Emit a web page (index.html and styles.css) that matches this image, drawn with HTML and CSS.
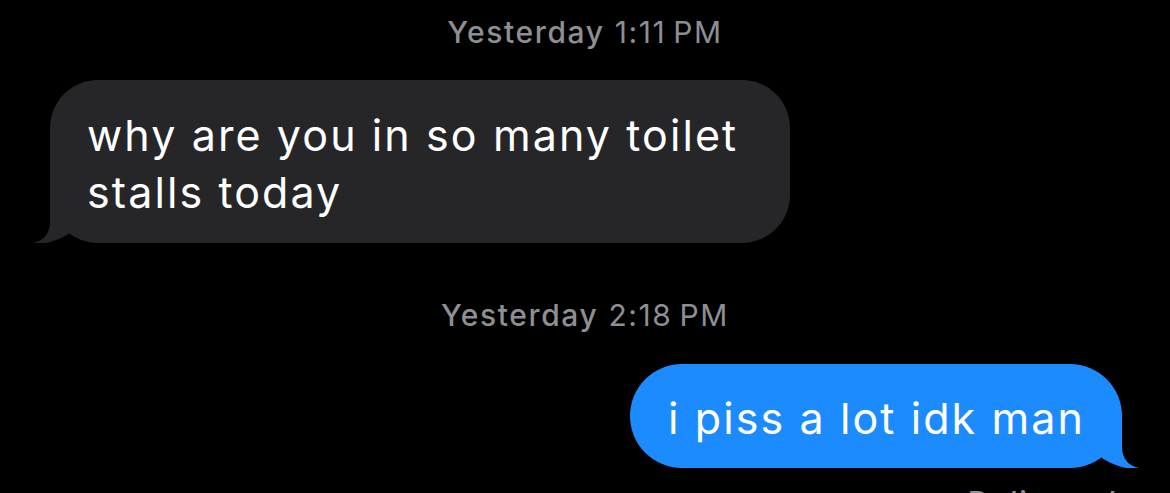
FILE: index.html
```html
<!DOCTYPE html>
<html lang="en">
<head>
<meta charset="utf-8">
<title>Messages</title>
<link rel="stylesheet" href="styles.css">
</head>
<body>
<main class="thread">
  <div class="stamp stamp-first"><span class="stamp-day">Yesterday</span> 1:11&#8239;PM</div>
  <div class="row row-in">
    <div class="bubble bubble-in">why are you in so many toilet stalls today<svg class="tail tail-in" viewBox="0 0 60 60" aria-hidden="true"><path d="M17 5 L17 39 C17 51 10 58 0 60 C13 62 26 57 37 50 L57 17 Z"/></svg></div>
  </div>
  <div class="stamp stamp-second"><span class="stamp-day">Yesterday</span> 2:18&#8239;PM</div>
  <div class="row row-out">
    <div class="bubble bubble-out">i piss a lot idk man<svg class="tail tail-out" viewBox="0 0 60 60" aria-hidden="true"><path d="M17 5 L17 39 C17 51 10 58 0 60 C13 62 26 57 37 50 L57 17 Z"/></svg></div>
  </div>
  <div class="status">Delivered</div>
</main>
</body>
</html>
```
FILE: styles.css
```css
html, body {
  margin: 0;
  padding: 0;
  background: #000;
  height: 100%;
  overflow: hidden;
}

body {
  font-family: Inter, "Noto Sans", "Liberation Sans", sans-serif;
  color: #fff;
}

.thread {
  display: flex;
  flex-direction: column;
  padding-top: 14px;
}

.stamp {
  text-align: center;
  font-size: 30px;
  line-height: 36px;
  letter-spacing: 1.6px;
  color: #8e8e93;
  font-weight: 400;
}

.stamp-day {
  font-weight: 500;
}

.stamp-second {
  margin-top: 54px;
}

.row {
  display: flex;
}

.row-in {
  justify-content: flex-start;
  padding-left: 50px;
  margin-top: 30px;
}

.row-out {
  justify-content: flex-end;
  padding-right: 48px;
  margin-top: 31px;
}

.bubble {
  position: relative;
  box-sizing: border-box;
  font-size: 43px;
  line-height: 57px;
  letter-spacing: 2.1px;
  border-radius: 52px;
}

.bubble-in {
  width: 740px;
  background: #262629;
  padding: 27px 37px 22px;
  border-radius: 48px;
}

.bubble-out {
  background: #1c8bfd;
  padding: 26px 37px 21px 38px;
}

.tail {
  position: absolute;
  bottom: 0;
  width: 60px;
  height: 60px;
}

.tail-in {
  left: -17px;
  fill: #262629;
}

.tail-out {
  right: -17px;
  fill: #1c8bfd;
  transform: scaleX(-1);
}

.status {
  align-self: flex-end;
  margin-right: 52px;
  margin-top: 16px;
  font-size: 30px;
  line-height: 36px;
  letter-spacing: 1.6px;
  font-weight: 500;
  color: #8e8e93;
}
```
